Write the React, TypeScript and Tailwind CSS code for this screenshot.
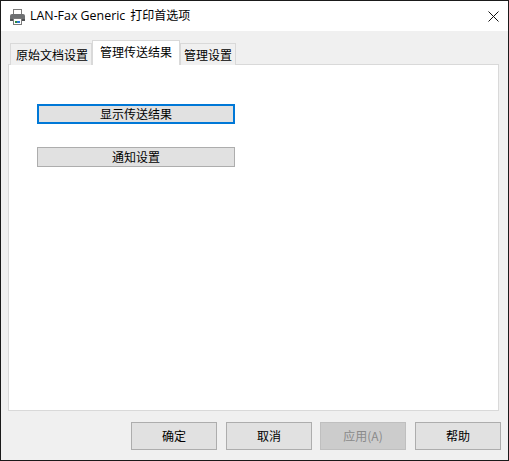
const font = { fontFamily: '"Noto Sans CJK SC", "Liberation Sans", sans-serif' };
const titleFont = { fontFamily: '"Open Sans", "Noto Sans CJK SC", sans-serif' };

const PrinterIcon = () => (
  <svg width="17" height="17" viewBox="0 0 17 17" className="shrink-0">
    <rect x="4.5" y="1.5" width="8" height="5" fill="#fff" stroke="#7a7a7a" />
    <path d="M1 8a2 2 0 0 1 2-2h11a2 2 0 0 1 2 2v4H1z" fill="#6e7072" />
    <rect x="1" y="11" width="15" height="2" fill="#4f5153" />
    <rect x="4.5" y="10.5" width="8" height="6" fill="#fff" stroke="#7a7a7a" />
    <rect x="6" y="13" width="2" height="2" fill="#2a8a3c" />
    <rect x="8" y="13" width="3" height="2" fill="#2a78d0" />
  </svg>
);

const PushButton = ({ label, focused }: { label: string; focused?: boolean }) => (
  <button
    className={`w-[198px] h-5 flex items-center justify-center bg-[#e1e1e1] text-[12px] text-black border ${
      focused ? 'border-2 border-[#0078d7]' : 'border-[#adadad]'
    }`}
  >
    <span className="-mt-[1px]">{label}</span>
  </button>
);

const FooterButton = ({ label, disabled, className }: { label: string; disabled?: boolean; className?: string }) => (
  <button
    className={`w-[86px] h-7 flex items-center justify-center border text-[12px] ${
      disabled ? 'bg-[#cccccc] border-[#bfbfbf] text-[#8a8a8a]' : 'bg-[#e1e1e1] border-[#adadad] text-black'
    } ${className ?? ''}`}
  >
    {label}
  </button>
);

export default function App() {
  return (
    <div style={font} className="w-[509px] h-[461px] flex flex-col bg-[#f0f0f0] border border-[#1a1a1a] overflow-hidden">
      <div className="h-[30px] shrink-0 bg-white flex items-center pl-[8px] pr-[9px]">
        <PrinterIcon />
        <div style={titleFont} className="ml-[4px] flex-1 flex items-center text-black whitespace-nowrap">
          <span className="text-[12.4px]">LAN-Fax Generic</span>
          <span className="ml-[5px] text-[12px]">打印首选项</span>
        </div>
        <svg width="11" height="11" viewBox="0 0 11 11">
          <path d="M.5.5l10 10M10.5.5l-10 10" stroke="#111" strokeWidth="1" fill="none" />
        </svg>
      </div>

      <div className="flex-1 flex flex-col pl-[7px] pr-[9px]">
        <div className="h-[33px] shrink-0 flex items-end pl-[2px] relative z-10">
          <div className="w-[82px] h-[22px] mb-[-1px] pl-[2px] flex items-center justify-center bg-[#f0f0f0] border border-[#d9d9d9] border-b-0 text-[12px] text-black whitespace-nowrap">
            原始文档设置
          </div>
          <div className="w-[88px] h-[25px] mb-[-1px] pb-[3px] flex items-center justify-center bg-white border border-[#d9d9d9] border-b-0 text-[12px] text-black whitespace-nowrap">
            管理传送结果
          </div>
          <div className="w-[56px] h-[22px] mb-[-1px] flex items-center justify-center bg-[#f0f0f0] border border-[#d9d9d9] border-b-0 text-[12px] text-black whitespace-nowrap">
            管理设置
          </div>
        </div>

        <div className="h-[347px] shrink-0 bg-white border border-[#d9d9d9] pl-[28px] pt-[39px] flex flex-col gap-[23px]">
          <PushButton label="显示传送结果" focused />
          <PushButton label="通知设置" />
        </div>

        <div className="flex-1 flex items-start justify-end pt-[11px] -mr-[2px]">
          <FooterButton label="确定" />
          <FooterButton label="取消" className="ml-[9px]" />
          <FooterButton label="应用(A)" disabled className="ml-[8px]" />
          <FooterButton label="帮助" className="ml-[9px]" />
        </div>
      </div>
    </div>
  );
}
